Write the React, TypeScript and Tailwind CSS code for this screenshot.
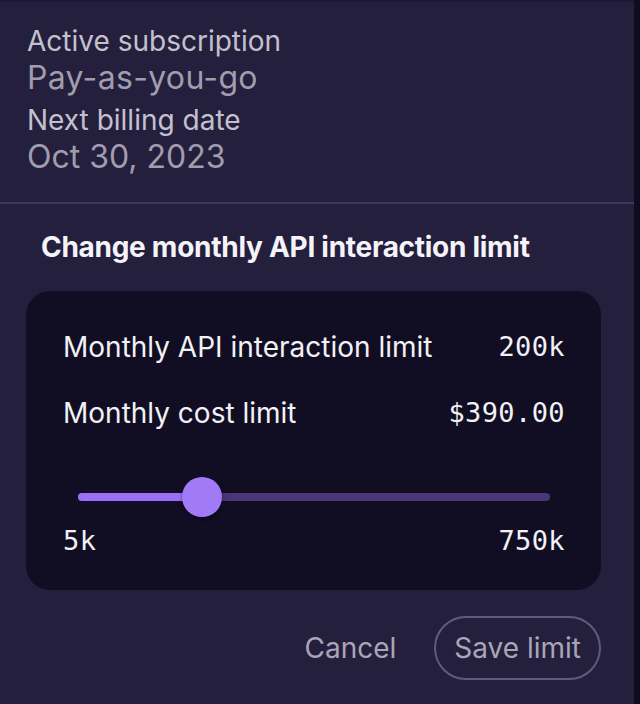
import React from "react";

export default function App() {
  const sans = { fontFamily: "Inter, 'Noto Sans', sans-serif" };
  const mono = { fontFamily: "'DejaVu Sans Mono', 'Liberation Mono', monospace" };
  return (
    <div className="w-[640px] h-[704px] flex bg-[#0f0c1f] overflow-hidden" style={sans}>
      <div className="w-[634px] h-[704px] flex flex-col bg-[#251f3e] border-t-2 border-[#1c1732]">
        <div className="px-[27px] pt-[22px] pb-[26px] flex flex-col">
          <div className="text-[28px] leading-[34px] text-[#c4c1cf]">Active subscription</div>
          <div className="text-[32px] leading-[39px] text-[#a19dad] tracking-[0.01em]">Pay-as-you-go</div>
          <div className="mt-[6px] text-[28px] leading-[34px] text-[#c4c1cf]">Next billing date</div>
          <div className="text-[32px] leading-[39px] text-[#a19dad]">Oct 30, 2023</div>
        </div>
        <div className="h-[2px] bg-[#3e3859]" />
        <div className="pl-[26px] pr-[33px] pt-[27px] flex flex-col">
          <div className="pl-[15px] text-[28px] leading-[32px] font-bold text-[#f4f3f8] tracking-[-0.01em]">
            Change monthly API interaction limit
          </div>
          <div className="mt-[28px] rounded-[24px] bg-[#110e24] pl-[37px] pr-[36px] pt-[40px] pb-[33px] flex flex-col">
            <div className="flex justify-between items-center h-[32px]">
              <span className="text-[28px] text-[#f2f1f5]">Monthly API interaction limit</span>
              <span className="text-[27px] text-[#f2f1f5] tracking-[0.4px]" style={mono}>200k</span>
            </div>
            <div className="mt-[34px] flex justify-between items-center h-[32px]">
              <span className="text-[28px] text-[#f2f1f5]">Monthly cost limit</span>
              <span className="text-[27px] text-[#f2f1f5] tracking-[0.4px]" style={mono}>$390.00</span>
            </div>
            <div className="mt-[48px] relative h-[40px] mx-[15px]">
              <div className="absolute left-0 right-0 top-[16px] h-[8px] rounded-full bg-[#4a3579]" />
              <div className="absolute left-0 w-[124px] top-[16px] h-[8px] rounded-full bg-[#9b6ff5]" />
              <div className="absolute left-[104px] top-0 w-[40px] h-[40px] rounded-full bg-[#a17bf7] shadow-[0_2px_4px_rgba(0,0,0,0.4)]" />
            </div>
            <div className="mt-[8px] flex justify-between items-center h-[32px] text-[27px] text-[#f2f1f5] tracking-[0.4px]" style={mono}>
              <span>5k</span>
              <span>750k</span>
            </div>
          </div>
          <div className="mt-[26px] flex justify-end items-center gap-[38px]">
            <span className="text-[28px] text-[#a9a5b6]">Cancel</span>
            <button className="h-[64px] px-[18px] rounded-full border-2 border-[#615b77] text-[28px] text-[#a9a5b6]">
              Save limit
            </button>
          </div>
        </div>
      </div>
    </div>
  );
}
